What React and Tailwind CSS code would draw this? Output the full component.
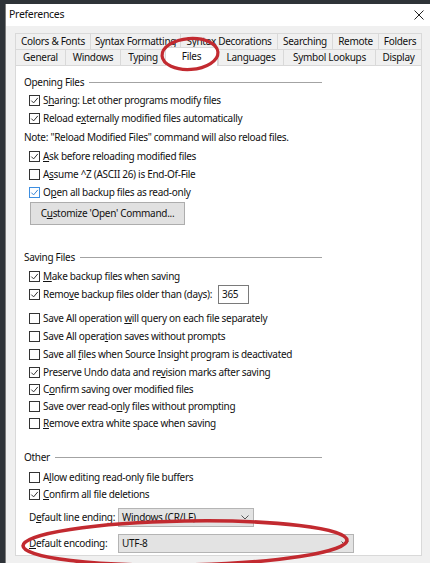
import React from "react";

const font = { fontFamily: '"Noto Sans", "DejaVu Sans", sans-serif' };

const Check = ({ checked, hover }) => (
  <span
    className={`flex h-[11px] w-[11px] shrink-0 items-center justify-center border bg-white ${
      hover ? "border-[#3d8ee0]" : "border-[#333333]"
    }`}
  >
    {checked && (
      <svg viewBox="0 0 9 9" className="h-[9px] w-[9px]">
        <path
          d="M1.3 4.6 L3.6 6.9 L7.8 1.9"
          fill="none"
          stroke={hover ? "#3a86d6" : "#333333"}
          strokeWidth="1"
        />
      </svg>
    )}
  </span>
);

const Row = ({ checked, hover, children, h = "h-[18px]", w = "" }) => (
  <div className={`flex ${h} ${w} items-center gap-[3px] pl-[13px]`}>
    <Check checked={checked} hover={hover} />
    <span className="whitespace-nowrap">{children}</span>
  </div>
);

const Group = ({ title, className = "" }) => (
  <div className={`flex h-[18px] w-[306px] items-center pl-[8px] ${className}`}>
    <span>{title}</span>
    <span className="ml-[5px] h-px flex-1 bg-[#a3a3a3]" />
  </div>
);

const Chevron = () => (
  <svg viewBox="0 0 8 5" className="h-[5px] w-[8px]">
    <path d="M0.5 0.5 L4 4 L7.5 0.5" fill="none" stroke="#555" strokeWidth="1" />
  </svg>
);

const Combo = ({ value, w }) => (
  <div
    className={`flex h-[19px] ${w} items-center justify-between border border-[#b4b4b4] bg-[#e3e3e3] pl-[3px] pr-[4px]`}
  >
    <span>{value}</span>
    <Chevron />
  </div>
);

const row1 = [
  ["Colors & Fonts", "w-[75px]"],
  ["Syntax Formatting", "w-[90px]"],
  ["Syntax Decorations", "w-[97px]"],
  ["Searching", "w-[55px]"],
  ["Remote", "w-[46px]"],
  ["Folders", "w-[44px]"],
];

const row2 = [
  ["General", "w-[50px]"],
  ["Windows", "w-[55px]"],
  ["Typing", "w-[45px]"],
  ["Files", "w-[53px]"],
  ["Languages", "w-[65px]"],
  ["Symbol Lookups", "w-[92px]"],
  ["Display", "w-[47px]"],
];

export default function App() {
  return (
    <div
      className="relative h-[563px] w-[430px] overflow-hidden bg-[#2e3338] pl-[5px] pt-[4px] text-[10px] tracking-[-0.3px] text-[#111]"
      style={font}
    >
      <div className="h-full w-full border-l border-[#7d7d7d] bg-[#f0f0f0]">
        {/* title bar */}
        <div className="flex h-[22px] items-center justify-between bg-white pl-[3px] pr-[6px]">
          <span className="text-[10.5px]">Preferences</span>
          <svg viewBox="0 0 10 10" className="h-[10px] w-[10px]">
            <path d="M0.5 0.5 L9.5 9.5 M9.5 0.5 L0.5 9.5" stroke="#222" strokeWidth="1" />
          </svg>
        </div>

        {/* tabs */}
        <div className="ml-[9px] mt-[7px] flex h-[16px]">
          {row1.map(([t, w], i) => (
            <div
              key={t}
              className={`flex ${w} items-center justify-center whitespace-nowrap border-l border-t border-[#d9d9d9] ${
                i === row1.length - 1 ? "border-r" : ""
              }`}
            >
              {t}
            </div>
          ))}
        </div>
        <div className="relative z-10 ml-[9px] flex h-[16px] items-end">
          {row2.map(([t, w], i) =>
            t === "Files" ? (
              <div
                key={t}
                className={`-mb-px flex h-[19px] ${w} items-center justify-center border-x border-t border-[#d9d9d9] bg-white pb-[1px]`}
              >
                {t}
              </div>
            ) : (
              <div
                key={t}
                className={`flex h-[16px] ${w} items-center justify-center whitespace-nowrap border-l border-t border-[#d9d9d9] ${
                  i === row2.length - 1 ? "border-r" : ""
                }`}
              >
                {t}
              </div>
            )
          )}
        </div>

        {/* panel */}
        <div className="ml-[9px] h-[491px] w-[407px] border border-[#d9d9d9] bg-white pt-[7px]">
          <Group title="Opening Files" />
          <Row checked>
            S<u>h</u>aring: Let other programs modify files
          </Row>
          <Row checked>
            Reload e<u>x</u>ternally modified files automatically
          </Row>
          <div className="mt-px flex h-[18px] items-center whitespace-nowrap pl-[8px]">
            Note: "Reload Modified Files" command will also reload files.
          </div>
          <div className="mt-px">
            <Row checked>
              <u>A</u>sk before reloading modified files
            </Row>
          </div>
          <Row>
            A<u>s</u>sume ^Z (ASCII 26) is End-Of-File
          </Row>
          <Row checked hover>
            O<u>p</u>en all backup files as read-only
          </Row>
          <div className="ml-[14px] mt-px flex h-[23px] w-[155px] items-center justify-center border border-[#adadad] bg-[#e1e1e1]">
            C<u>u</u>stomize 'Open' Command...
          </div>

          <Group title="Saving Files" className="mt-[23px]" />
          <div className="mt-px">
            <Row checked>
              <u>M</u>ake backup files when saving
            </Row>
          </div>
          <div className="flex h-[19px] items-center">
            <Row checked h="h-[19px]" w="w-[202px]">
              Remo<u>v</u>e backup files older than (days):
            </Row>
            <div className="flex h-[19px] w-[31px] items-center border border-[#7a7a7a] bg-white pl-[3px]">
              365
            </div>
          </div>
          <div className="mt-[5px]">
            <Row>
              Save All operation <u>w</u>ill query on each file separately
            </Row>
            <Row>
              Save All opera<u>t</u>ion saves without prompts
            </Row>
            <Row>
              Save all <u>f</u>iles when Source Insight program is deactivated
            </Row>
            <Row checked>
              Preserve Undo data and re<u>v</u>ision marks after saving
            </Row>
            <Row checked h="h-[17px]">
              C<u>o</u>nfirm saving over modified files
            </Row>
            <Row h="h-[17px]">
              Save over read-o<u>n</u>ly files without prompting
            </Row>
            <Row h="h-[17px]">
              <u>R</u>emove extra white space when saving
            </Row>
          </div>

          <Group title="Other" className="mt-[16px]" />
          <div className="mt-[2px]">
            <Row>
              A<u>l</u>low editing read-only file buffers
            </Row>
            <Row checked h="h-[17px]">
              <u>C</u>onfirm all file deletions
            </Row>
          </div>
          <div className="mt-[5px] flex items-center pl-[13px]">
            <span className="w-[89px] whitespace-nowrap">
              D<u>e</u>fault line ending:
            </span>
            <Combo value="Windows (CR/LF)" w="w-[136px]" />
          </div>
          <div className="mt-[7px] flex items-center pl-[13px]">
            <span className="w-[89px] whitespace-nowrap">
              <u>D</u>efault encoding:
            </span>
            <Combo value="UTF-8" w="w-[236px]" />
          </div>
        </div>
      </div>

      {/* red hand-drawn annotations */}
      <svg
        className="pointer-events-none absolute left-0 top-0 z-20"
        width="430"
        height="563"
        viewBox="0 0 430 563"
      >
        <ellipse
          cx="190"
          cy="54"
          rx="28"
          ry="15.5"
          fill="none"
          stroke="#c22a30"
          strokeWidth="3.2"
          transform="rotate(-4 190 54)"
        />
        <ellipse
          cx="185"
          cy="543"
          rx="162"
          ry="22"
          fill="none"
          stroke="#c22a30"
          strokeWidth="3.6"
          transform="rotate(-1 185 543)"
        />
      </svg>
    </div>
  );
}
